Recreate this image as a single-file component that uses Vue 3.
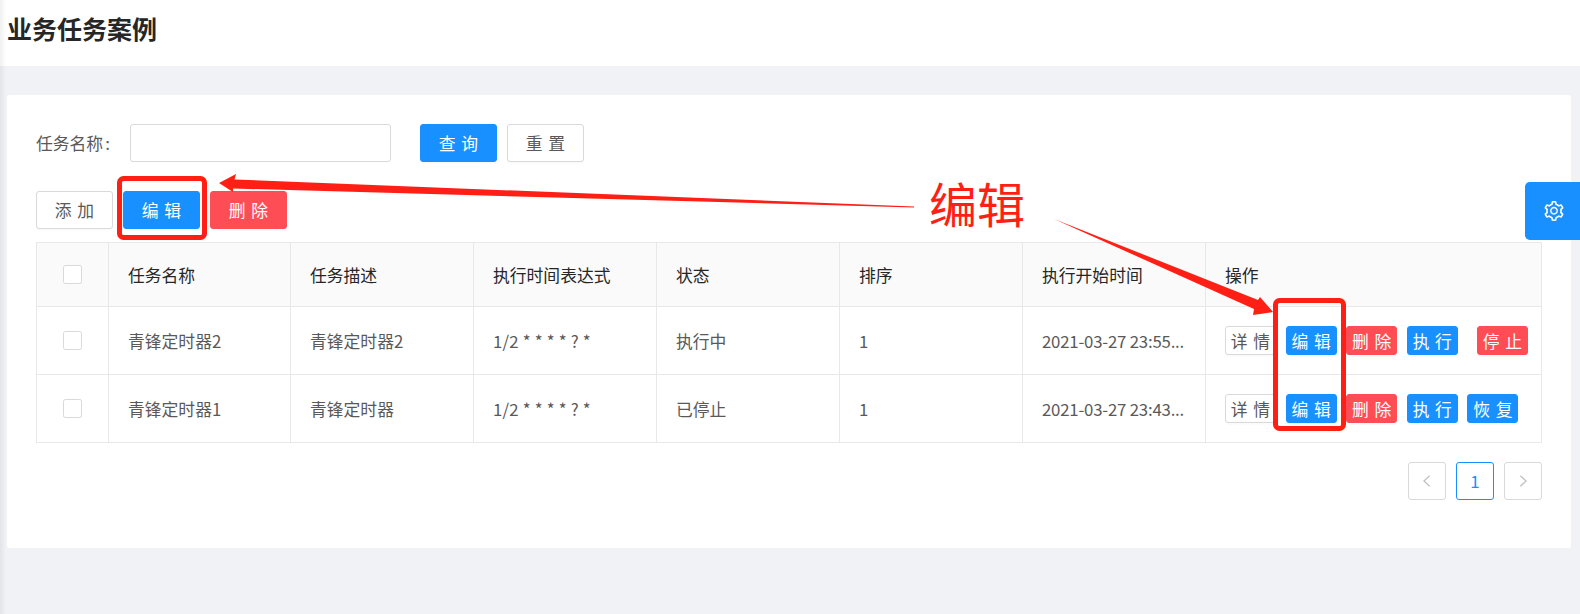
<script setup>
import { ref } from 'vue'

const taskName = ref('')

const columns = ['任务名称', '任务描述', '执行时间表达式', '状态', '排序', '执行开始时间', '操作']

// start is already cut off the way the table shows it
const rows = [
  { id: 2, name: '青锋定时器2', desc: '青锋定时器2', cron: '1/2 * * * * ? *', status: '执行中', sort: 1, start: '2021-03-27 23:55...', running: true },
  { id: 1, name: '青锋定时器1', desc: '青锋定时器', cron: '1/2 * * * * ? *', status: '已停止', sort: 1, start: '2021-03-27 23:43...', running: false }
]

const gearPath = 'M924.8 625.7l-65.5-56c3.1-19 4.7-38.4 4.7-57.8s-1.6-38.8-4.7-57.8l65.5-56a32.03 32.03 0 0 0 9.3-35.2l-.9-2.6a443.74 443.74 0 0 0-79.7-137.9l-1.8-2.1a32.12 32.12 0 0 0-35.1-9.5l-81.3 28.9c-30-24.6-63.5-44-99.7-57.6l-15.7-85a32.05 32.05 0 0 0-25.8-25.7l-2.7-.5c-52.1-9.4-106.9-9.4-159 0l-2.7.5a32.05 32.05 0 0 0-25.8 25.7l-15.8 85.4a351.86 351.86 0 0 0-99 57.4l-81.9-29.1a32 32 0 0 0-35.1 9.5l-1.8 2.1a446.02 446.02 0 0 0-79.7 137.9l-.9 2.6c-4.5 12.5-.8 26.5 9.3 35.2l66.3 56.6c-3.1 18.8-4.6 38-4.6 57.1 0 19.2 1.5 38.4 4.6 57.1L99 625.5a32.03 32.03 0 0 0-9.3 35.2l.9 2.6c18.1 50.4 44.9 96.9 79.7 137.9l1.8 2.1a32.12 32.12 0 0 0 35.1 9.5l81.9-29.1c29.8 24.5 63.1 43.9 99 57.4l15.8 85.4a32.05 32.05 0 0 0 25.8 25.7l2.7.5a449.4 449.4 0 0 0 159 0l2.7-.5a32.05 32.05 0 0 0 25.8-25.7l15.7-85a350 350 0 0 0 99.7-57.6l81.3 28.9a32 32 0 0 0 35.1-9.5l1.8-2.1c34.8-41.1 61.6-87.5 79.7-137.9l.9-2.6c4.5-12.3.8-26.3-9.3-35zM788.3 465.9c2.5 15.1 3.8 30.6 3.8 46.1s-1.3 31-3.8 46.1l-6.6 40.1 74.7 63.9a370.03 370.03 0 0 1-42.6 73.6L721 702.8l-31.4 25.8c-23.9 19.6-50.5 35-79.3 45.8l-38.1 14.3-17.9 97a377.5 377.5 0 0 1-85 0l-17.9-97.2-37.8-14.5c-28.5-10.8-55-26.2-78.7-45.7l-31.4-25.9-93.4 33.2c-17-22.9-31.2-47.6-42.6-73.6l75.5-64.5-6.5-40c-2.4-14.9-3.7-30.3-3.7-45.5 0-15.3 1.2-30.6 3.7-45.5l6.5-40-75.5-64.5c11.3-26.1 25.6-50.7 42.6-73.6l93.4 33.2 31.4-25.9c23.7-19.5 50.2-34.9 78.7-45.7l37.9-14.3 17.9-97.2c28.1-3.2 56.8-3.2 85 0l17.9 97 38.1 14.3c28.7 10.8 55.4 26.2 79.3 45.8l31.4 25.8 92.8-32.9c17 22.9 31.2 47.6 42.6 73.6L781.8 426l6.5 39.9zM512 326c-97.2 0-176 78.8-176 176s78.8 176 176 176 176-78.8 176-176-78.8-176-176-176zm79.2 255.2A111.6 111.6 0 0 1 512 614c-29.9 0-58-11.7-79.2-32.8A111.6 111.6 0 0 1 400 502c0-29.9 11.7-58 32.8-79.2C454 401.6 482.1 390 512 390c29.9 0 58 11.6 79.2 32.8A111.6 111.6 0 0 1 624 502c0 29.9-11.7 58-32.8 79.2z'
</script>

<template>
  <div class="page">
    <header class="page-header">
      <h1 class="page-title">业务任务案例</h1>
    </header>

    <main class="page-main">
      <section class="card">
        <form class="search-form" @submit.prevent>
          <label class="search-label">任务名称<span class="colon">:</span></label>
          <input v-model="taskName" class="search-input" type="text" />
          <div class="search-btns">
            <button class="btn primary"><span>查询</span></button>
            <button class="btn"><span>重置</span></button>
          </div>
        </form>

        <div class="toolbar">
          <button class="btn"><span>添加</span></button>
          <button class="btn primary"><span>编辑</span></button>
          <button class="btn danger"><span>删除</span></button>
        </div>

        <table class="task-table">
          <colgroup>
            <col class="col-check" />
            <col class="col-first" />
            <col v-for="n in 5" :key="n" class="col-text" />
            <col />
          </colgroup>
          <thead>
            <tr>
              <th class="check-cell"><i class="checkbox"></i></th>
              <th v-for="col in columns" :key="col">{{ col }}</th>
            </tr>
          </thead>
          <tbody>
            <tr v-for="row in rows" :key="row.id">
              <td class="check-cell"><i class="checkbox"></i></td>
              <td>{{ row.name }}</td>
              <td>{{ row.desc }}</td>
              <td class="cron-cell">{{ row.cron }}</td>
              <td>{{ row.status }}</td>
              <td>{{ row.sort }}</td>
              <td class="date-cell">{{ row.start }}</td>
              <td>
                <div class="actions">
                  <button class="btn small"><span>详情</span></button>
                  <button class="btn small primary"><span>编辑</span></button>
                  <button class="btn small danger"><span>删除</span></button>
                  <button class="btn small primary"><span>执行</span></button>
                  <button v-if="row.running" class="btn small danger stop"><span>停止</span></button>
                  <button v-else class="btn small primary"><span>恢复</span></button>
                </div>
              </td>
            </tr>
          </tbody>
        </table>

        <nav class="pager">
          <span class="pager-item">
            <svg viewBox="0 0 16 16" width="14" height="14"><path d="M11 2 4.5 8l6.5 6" /></svg>
          </span>
          <span class="pager-item active">1</span>
          <span class="pager-item">
            <svg viewBox="0 0 16 16" width="14" height="14"><path d="M5 2l6.5 6L5 14" /></svg>
          </span>
        </nav>
      </section>
    </main>

    <div class="settings-tab">
      <svg viewBox="64 64 896 896" width="20" height="20" fill="currentColor"><path :d="gearPath" /></svg>
    </div>

    <!-- red annotations drawn on top of the screenshot -->
    <svg class="marks" width="1580" height="614" viewBox="0 0 1580 614">
      <rect x="119.5" y="178.5" width="85" height="59" rx="4" />
      <rect x="1275.5" y="300.5" width="68" height="128" rx="4" />
      <polygon points="219,183 236,174 234.5,179.5 914,206.5 914,207.5 233,188.5 233,192" />
      <polygon points="1054,219 1258,300 1260,297 1273,312 1253,315 1254,309" />
    </svg>
    <span class="marks-label">编辑</span>
  </div>
</template>

<style>
html, body { margin: 0; background: #f0f2f5; overflow: hidden; }
</style>

<style scoped>
.page { position: relative; width: 1580px; height: 614px; overflow: hidden; background: #f0f2f5; font-family: "Noto Sans CJK SC", "Liberation Sans", sans-serif; font-size: 16.8px; color: #595959; }
.page::before { content: ""; position: absolute; left: 0; top: 0; bottom: 0; width: 6px; background: linear-gradient(to right, rgba(0,0,0,0.06), rgba(0,0,0,0)); z-index: 1; }

.page-header { height: 66px; box-sizing: border-box; background: #fff; display: flex; align-items: center; padding: 0 0 10px 7px; }
.page-title { margin: 0; font-size: 25px; font-weight: 700; color: #262626; line-height: 1.2; }

.page-main { padding: 29px 9px 0 7px; }
.card { height: 453px; box-sizing: border-box; background: #fff; border-radius: 2px; padding: 29px 29px 0 29px; }

.search-form { display: flex; align-items: center; height: 38px; }
.search-label { width: 94px; white-space: nowrap; }
.colon { margin-left: 2px; }
.search-input { width: 261px; height: 38px; box-sizing: border-box; border: 1.2px solid #d9d9d9; border-radius: 3px; outline: none; background: #fff; }
.search-btns { display: flex; gap: 10px; margin-left: 29px; }

.toolbar { display: flex; gap: 10px; margin-top: 29px; }

.btn { width: 77px; height: 38.4px; box-sizing: border-box; padding: 0; border: 1.2px solid #d9d9d9; border-radius: 3px; background: #fff; color: #595959; font: inherit; box-shadow: 0 2px 0 rgba(0,0,0,0.015); display: flex; align-items: center; justify-content: center; }
.btn span { letter-spacing: 0.34em; margin-right: -0.34em; }
.btn.primary { background: #1890ff; border-color: #1890ff; color: #fff; }
.btn.danger { background: #ff4d55; border-color: #ff4d55; color: #fff; }
.btn.small { width: 51px; height: 28.8px; }

.task-table { width: 1506px; margin-top: 13px; border-collapse: collapse; table-layout: fixed; }
.col-check { width: 72px; }
.col-first { width: 182px; }
.col-text { width: 183px; }
.task-table th, .task-table td { border: 1px solid #e8e8e8; padding: 0 0 0 19px; text-align: left; font-weight: 400; }
.task-table th { height: 63px; background: #fafafa; color: #262626; }
.task-table td { height: 67px; }
.task-table .check-cell { padding: 0; text-align: center; }
.task-table .cron-cell { letter-spacing: 0.2px; }
.task-table .date-cell { white-space: nowrap; letter-spacing: -0.2px; }
.checkbox { display: block; width: 19px; height: 19px; margin: 0 auto; box-sizing: border-box; border: 1.2px solid #d9d9d9; border-radius: 2.4px; background: #fff; }

.actions { display: flex; gap: 9.6px; }
.stop { margin-left: 9.6px; }

.pager { display: flex; justify-content: flex-end; gap: 10px; margin-top: 19px; }
.pager-item { width: 38px; height: 38px; box-sizing: border-box; border: 1.2px solid #d9d9d9; border-radius: 3px; display: flex; align-items: center; justify-content: center; color: #1890ff; }
.pager-item svg { fill: none; stroke: #bfbfbf; stroke-width: 1.4; }
.pager-item.active { border-color: #1890ff; }

.settings-tab { position: absolute; right: 0; top: 182px; width: 55px; height: 58px; padding-left: 2px; box-sizing: border-box; background: #1890ff; border-radius: 4.8px 0 0 4.8px; color: #fff; display: flex; align-items: center; justify-content: center; }

.marks { position: absolute; left: 0; top: 0; pointer-events: none; }
.marks rect { fill: none; stroke: #ff1f14; stroke-width: 5; }
.marks polygon { fill: #ff1f14; }
.marks-label { position: absolute; left: 929px; top: 167px; font-size: 48px; line-height: 70px; color: #ff1f14; }
</style>
